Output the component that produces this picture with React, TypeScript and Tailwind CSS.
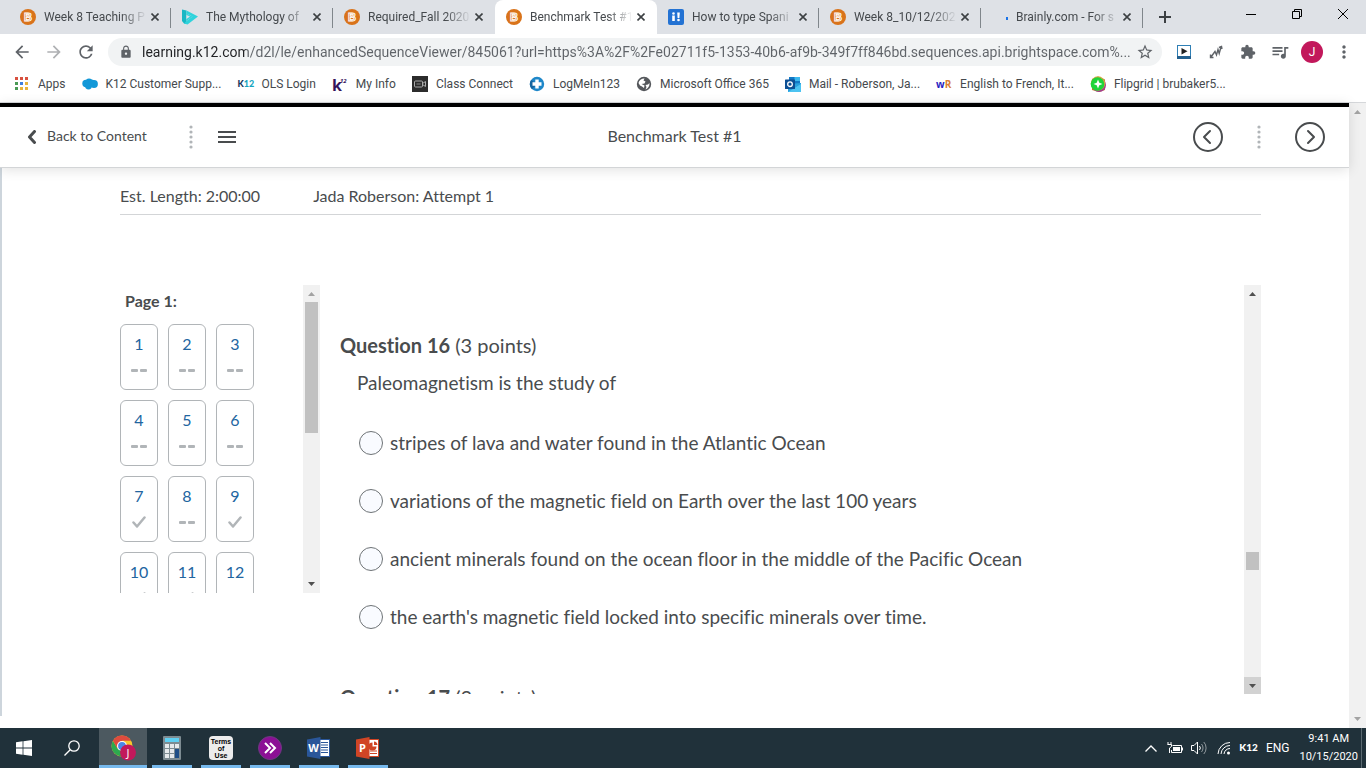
import { useState } from "react";
import type { ReactNode } from "react";
import {
  MdArrowBack,
  MdArrowForward,
  MdExtension,
  MdLock,
  MdMoreVert,
  MdQueueMusic,
  MdRefresh,
  MdStarBorder,
} from "react-icons/md";

/* ---------- Browser icons ---------- */

function BrightspaceIcon() {
  return (
    <svg viewBox="0 0 16 16" className="w-4 h-4 shrink-0" aria-hidden="true">
      <circle cx="8" cy="8" r="8" fill="#d9731a" />
      <text
        x="8"
        y="12"
        fontSize="11"
        fontWeight="700"
        fontFamily="Liberation Sans, sans-serif"
        textAnchor="middle"
        fill="#d9731a"
        stroke="#fff"
        strokeWidth="0.9"
      >
        B
      </text>
    </svg>
  );
}

function StudyIcon() {
  return (
    <svg viewBox="0 0 16 16" className="w-4 h-4 shrink-0" aria-hidden="true">
      <path d="M0 .5l4.500 1V15L2 14.500 0 12z" fill="#19b7c4" />
      <path d="M4.500 1.500L16 7.500 5.500 15.500 2 14.500l2.500-2.500 6-4.500-6-3z" fill="#2fd3dc" />
      <path d="M4.500 6l3.500 1.500-3.500 2.500z" fill="#dee1e6" />
      <path d="M4.500 4.500l6 3-6 4.500V10L8 7.500 4.500 6z" fill="#2fd3dc" />
    </svg>
  );
}

function HowToIcon() {
  return (
    <svg viewBox="0 0 16 16" className="w-4 h-4 shrink-0" aria-hidden="true">
      <rect width="16" height="16" rx="2" fill="#2372d3" />
      <path d="M4.200 6.500h2.600V12H4.200zM9.200 3.500h2.600l-.4 5.500H9.600z" fill="#fff" />
      <circle cx="5.500" cy="4.500" r="1.300" fill="#fff" />
      <circle cx="10.500" cy="11" r="1.300" fill="#fff" />
    </svg>
  );
}

function LoadingIcon() {
  return (
    <svg viewBox="0 0 16 16" className="w-4 h-4 shrink-0" aria-hidden="true">
      <path d="M15 8v3" stroke="#1a73e8" strokeWidth="2" />
    </svg>
  );
}

function AppsIcon() {
  const colors = ["#d85140", "#d85140", "#d85140", "#4a9a55", "#3f7fe0", "#e8b33c", "#4a9a55", "#e8b33c", "#e8b33c"];
  return (
    <svg viewBox="0 0 16 16" className="w-4 h-4 shrink-0" aria-hidden="true">
      {colors.map((c, i) => (
        <rect key={i} x={(i % 3) * 5 + 1} y={Math.floor(i / 3) * 5 + 1} width="3" height="3" fill={c} />
      ))}
    </svg>
  );
}

function CloudIcon() {
  return (
    <svg viewBox="0 0 16 16" className="w-4 h-4 shrink-0" aria-hidden="true">
      <g fill="#1298d8">
        <circle cx="4" cy="7.500" r="3.700" />
        <circle cx="7" cy="6" r="3.500" />
        <circle cx="12" cy="8" r="3.900" />
        <circle cx="6.500" cy="10" r="3.400" />
        <circle cx="9.500" cy="6.500" r="3" />
      </g>
    </svg>
  );
}

function K12Icon() {
  return (
    <span className="w-4 shrink-0 text-[9px] leading-4 font-black text-[#12355b] font-[Lato,sans-serif]" aria-hidden="true">
      K<span className="text-[#16a5c0]">12</span>
    </span>
  );
}

function MyInfoIcon() {
  return (
    <svg viewBox="0 0 16 16" className="w-4 h-4 shrink-0" aria-hidden="true">
      <text x="0" y="15" fontSize="16" fontWeight="700" fontFamily="Noto Sans, sans-serif" fill="#33135c">
        k
      </text>
      <text x="8" y="7" fontSize="6" fontWeight="700" fontStyle="italic" fontFamily="Noto Sans, sans-serif" fill="#33135c">
        12
      </text>
    </svg>
  );
}

function VideoIcon() {
  return (
    <svg viewBox="0 0 16 16" className="w-4 h-4 shrink-0" aria-hidden="true">
      <rect width="16" height="16" fill="#2b2b2b" />
      <rect x="2.500" y="5" width="8" height="6" rx="1" fill="none" stroke="#aaa" />
      <path d="M10.500 7.500l3-2v5l-3-2" fill="none" stroke="#aaa" />
      <path d="M4.500 8h4" stroke="#888" />
    </svg>
  );
}

function LogMeInIcon() {
  return (
    <svg viewBox="0 0 16 16" className="w-4 h-4 shrink-0" aria-hidden="true">
      <circle cx="8" cy="8" r="7.200" fill="#1e87c9" />
      <path d="M2 4a7.200 7.200 0 0 0 1 9.200L8 8z" fill="#16659f" />
      <path d="M6.300 3.500h3.400v2.800h2.800v3.400H9.700v2.800H6.300V9.700H3.500V6.300h2.800z" fill="#fff" />
    </svg>
  );
}

function GlobeIcon() {
  return (
    <svg viewBox="0 0 16 16" className="w-4 h-4 shrink-0" aria-hidden="true">
      <circle cx="8" cy="8" r="7.200" fill="#55585c" />
      <path
        d="M2.500 7C3 4 5.500 2.300 8.500 2.400L7.500 4.500l2 1-1 2-3 .5 3 1.500L8 12l-2-1.500-2-1zM9.500 13.500l1-2.500-1-2 2.500-.5L13.500 7c.3 3-1.500 5.600-4 6.500z"
        fill="#fff"
      />
    </svg>
  );
}

function OutlookIcon() {
  return (
    <svg viewBox="0 0 16 16" className="w-4 h-4 shrink-0" aria-hidden="true">
      <path d="M4 1h11v7H4z" fill="#1279c6" />
      <path d="M9.500 1H15v4H9.500z" fill="#3bb8ee" />
      <path d="M3 8l13-1v9H3z" fill="#28a0de" />
      <path d="M3 16l13-8v8z" fill="#4cc3f1" />
      <rect y="3.500" width="10" height="9.500" rx="0.500" fill="#0c4f94" />
      <circle cx="5" cy="8.200" r="2.300" fill="none" stroke="#fff" strokeWidth="1.300" />
    </svg>
  );
}

function WordReferenceIcon() {
  return (
    <span className="w-4 shrink-0 text-[10px] leading-4 font-bold text-[#2a1fc0] font-['Open_Sans',sans-serif]" aria-hidden="true">
      w<span className="text-[#d98032]">R</span>
    </span>
  );
}

function FlipgridIcon() {
  return (
    <svg viewBox="0 0 16 16" className="w-4 h-4 shrink-0" aria-hidden="true">
      <path d="M2 3l6-2.500 7 3V14l-6 2-7-2z" fill="#c5792a" />
      <circle cx="9" cy="9" r="7" fill="#a33b8f" />
      <circle cx="8" cy="7.500" r="7.200" fill="#d9a441" />
      <circle cx="7.500" cy="8" r="6.800" fill="#1fd43a" />
      <path d="M8 3.500L9.300 6.700 12.500 8 9.300 9.300 8 12.500 6.700 9.300 3.500 8l3.200-1.300z" fill="#fff" />
    </svg>
  );
}

/* ---------- Browser chrome ---------- */

const tabs: { title: string; icon: ReactNode; active?: boolean; divider?: boolean }[] = [
  { title: "Week 8 Teaching P", icon: <BrightspaceIcon />, divider: true },
  { title: "The Mythology of", icon: <StudyIcon />, divider: true },
  { title: "Required_Fall 2020", icon: <BrightspaceIcon /> },
  { title: "Benchmark Test #1", icon: <BrightspaceIcon />, active: true },
  { title: "How to type Spani", icon: <HowToIcon />, divider: true },
  { title: "Week 8_10/12/202", icon: <BrightspaceIcon />, divider: true },
  { title: "Brainly.com - For s", icon: <LoadingIcon />, divider: true },
];

const bookmarks: { label: string; icon: ReactNode }[] = [
  { label: "Apps", icon: <AppsIcon /> },
  { label: "K12 Customer Supp...", icon: <CloudIcon /> },
  { label: "OLS Login", icon: <K12Icon /> },
  { label: "My Info", icon: <MyInfoIcon /> },
  { label: "Class Connect", icon: <VideoIcon /> },
  { label: "LogMeIn123", icon: <LogMeInIcon /> },
  { label: "Microsoft Office 365", icon: <GlobeIcon /> },
  { label: "Mail - Roberson, Ja...", icon: <OutlookIcon /> },
  { label: "English to French, It...", icon: <WordReferenceIcon /> },
  { label: "Flipgrid | brubaker5...", icon: <FlipgridIcon /> },
];

function TabStrip() {
  return (
    <div className="flex h-[34px] bg-[#dee1e6] pl-[9px] text-[#45494d]">
      {tabs.map((tab) => (
        <div
          key={tab.title}
          className={
            tab.active
              ? "flex items-center w-[162px] pl-[11px] pr-2 bg-white rounded-t-lg"
              : "relative flex items-center w-[162px] pl-[11px] pr-2"
          }
        >
          {tab.icon}
          <span className="flex-1 min-w-0 ml-2 overflow-hidden whitespace-nowrap text-xs mask-r-from-75%">{tab.title}</span>
          <button aria-label={"Close " + tab.title} className="w-4 h-4 flex items-center justify-center">
            <svg viewBox="0 0 8 8" className="w-2 h-2" stroke="#3c4043" strokeWidth="1.600">
              <path d="M.5.5l7 7M7.500.5l-7 7" />
            </svg>
          </button>
          {tab.divider && <span className="absolute right-0 top-2 h-5 w-px bg-[#80868b]" />}
        </div>
      ))}
      <button aria-label="New tab" className="w-11 flex items-center justify-center">
        <svg viewBox="0 0 12 12" className="w-3 h-3">
          <path d="M6 0v12M0 6h12" stroke="#3c4043" strokeWidth="2" />
        </svg>
      </button>
      <div className="ml-auto flex pb-1.5">
        <button aria-label="Minimize" className="w-[46px] flex items-center justify-center">
          <svg viewBox="0 0 10 10" className="w-2.5 h-2.5">
            <path d="M0 5.500h10" stroke="#000" />
          </svg>
        </button>
        <button aria-label="Restore" className="w-[46px] flex items-center justify-center">
          <svg viewBox="0 0 10 10" className="w-2.5 h-2.5" fill="none" stroke="#000">
            <path d="M.5 2.500h7v7h-7zM2.500 2.500v-2h7v7h-2" />
          </svg>
        </button>
        <button aria-label="Close" className="w-[46px] flex items-center justify-center">
          <svg viewBox="0 0 10 10" className="w-2.5 h-2.5" stroke="#000">
            <path d="M0 0l10 10M10 0L0 10" />
          </svg>
        </button>
      </div>
    </div>
  );
}

function ToolButton({ label, children }: { label: string; children: ReactNode }) {
  return (
    <button aria-label={label} className="w-8 h-8 shrink-0 flex items-center justify-center text-[#5f6368]">
      {children}
    </button>
  );
}

function Toolbar() {
  return (
    <div className="flex items-center h-9 px-1.5">
      <ToolButton label="Back">
        <MdArrowBack className="w-5 h-5" />
      </ToolButton>
      <ToolButton label="Forward">
        <MdArrowForward className="w-5 h-5 opacity-50" />
      </ToolButton>
      <ToolButton label="Reload">
        <MdRefresh className="w-5 h-5" />
      </ToolButton>
      <div className="flex flex-1 min-w-0 items-center h-7 mx-1.5 pl-[11px] pr-2 rounded-full bg-[#f1f3f4] text-[#5f6368]">
        <MdLock className="w-3.5 h-3.5 shrink-0" />
        <input
          aria-label="Address and search bar"
          className="flex-1 min-w-0 ml-[9px] outline-none text-sm text-transparent bg-clip-text bg-[linear-gradient(90deg,#202124_104px,#5f6368_104px)]"
          defaultValue="learning.k12.com/d2l/le/enhancedSequenceViewer/845061?url=https%3A%2F%2Fe02711f5-1353-40b6-af9b-349f7ff846bd.sequences.api.brightspace.com%..."
        />
        <button aria-label="Bookmark this tab">
          <MdStarBorder className="w-[18px] h-[18px]" />
        </button>
      </div>
      <ToolButton label="Video player">
        <svg viewBox="0 0 14 14" className="w-3.5 h-3.5">
          <rect x="0.500" y="0.500" width="13" height="12" fill="#fff" stroke="#2f7fb5" />
          <rect y="11" width="14" height="3" fill="#23608f" />
          <path d="M4.500 3l6 3.200-6 3.200z" fill="#222" />
        </svg>
      </ToolButton>
      <ToolButton label="Annotate">
        <svg viewBox="0 0 14 14" className="w-3.5 h-3.5" fill="none" stroke="#5f6368" strokeWidth="1.400">
          <path d="M2 12L6 6.500 7.500 10 9 4.500l1.200 4L12 2M1.500 9.500v3h3M10 2.500l2.500-1 .5 2.500" />
        </svg>
      </ToolButton>
      <ToolButton label="Extensions">
        <MdExtension className="w-4 h-4" />
      </ToolButton>
      <ToolButton label="Media">
        <MdQueueMusic className="w-5 h-5" />
      </ToolButton>
      <ToolButton label="Profile">
        <span className="w-[22px] h-[22px] rounded-full bg-[#c2185b] text-white text-xs leading-[22px]">J</span>
      </ToolButton>
      <ToolButton label="Menu">
        <MdMoreVert className="w-5 h-5" />
      </ToolButton>
    </div>
  );
}

function BookmarksBar() {
  return (
    <nav aria-label="Bookmarks" className="flex items-center gap-4 h-8 pl-3.5 pb-1 text-xs text-[#45494d]">
      {bookmarks.map((b) => (
        <a key={b.label} href="#" className="flex items-center gap-2 whitespace-nowrap">
          {b.icon}
          {b.label}
        </a>
      ))}
    </nav>
  );
}

/* ---------- Page ---------- */

function Arrow({ up, className }: { up?: boolean; className: string }) {
  return (
    <svg viewBox="0 0 7 4" className={className} fill="currentColor" aria-hidden="true">
      <path d={up ? "M0 4L3.500 0 7 4z" : "M0 0l3.500 4L7 0z"} />
    </svg>
  );
}

function Dots() {
  return (
    <svg viewBox="0 0 4 24" className="w-1 h-6" fill="#b1b5b8" aria-hidden="true">
      {[2, 7, 12, 17, 22].map((y) => (
        <circle key={y} cx="2" cy={y} r="1.600" />
      ))}
    </svg>
  );
}

function CircleButton({ label, d }: { label: string; d: string }) {
  return (
    <button aria-label={label}>
      <svg viewBox="0 0 30 30" className="w-[30px] h-[30px]" fill="none" stroke="#494c4e" strokeWidth="2">
        <circle cx="15" cy="15" r="14" />
        <path d={d} strokeLinecap="round" strokeLinejoin="round" />
      </svg>
    </button>
  );
}

function ViewerHeader() {
  return (
    <header className="relative grid grid-cols-[1fr_auto_1fr] items-center h-[65px] shrink-0 border-t-4 border-t-black border-b border-b-[#d3d5d7] bg-white shadow-[0_2px_12px_rgba(0,0,0,0.12)]">
      <div className="flex items-center pl-[27px]">
        <a href="#" className="flex items-center gap-2.5 text-sm">
          <svg viewBox="0 0 10 14" className="w-2.5 h-3.5" fill="none" stroke="#494c4e" strokeWidth="3" aria-hidden="true">
            <path d="M7.500 1.500L2.500 7l5 5.500" strokeLinecap="round" strokeLinejoin="round" />
          </svg>
          <span className="pb-0.5">Back to Content</span>
        </a>
        <div className="flex items-center gap-[25px] ml-[42px]">
          <Dots />
          <button aria-label="Table of contents">
            <svg viewBox="0 0 18 12" className="w-[18px] h-3" stroke="#494c4e" strokeWidth="2">
              <path d="M0 1h18M0 6h18M0 11h18" />
            </svg>
          </button>
        </div>
      </div>
      <h1 className="pb-0.5 text-base">Benchmark Test #1</h1>
      <div className="flex items-center justify-end gap-[34px] pr-6">
        <CircleButton label="Previous" d="M17 9l-6 6 6 6" />
        <Dots />
        <CircleButton label="Next" d="M13 9l6 6-6 6" />
      </div>
    </header>
  );
}

const answered = [7, 9, 10, 11];

function QuestionNav() {
  return (
    <div className="flex w-[200px] h-[308px] shrink-0">
      <div className="flex-1 overflow-hidden">
        <h2 className="mt-1 ml-[5px] text-base leading-6 font-bold">Page 1:</h2>
        <div className="grid grid-cols-[38px_38px_38px] gap-2.5 mt-[11px]">
          {Array.from({ length: 12 }, (_, i) => i + 1).map((n) => (
            <a
              key={n}
              href="#"
              className="flex flex-col items-center h-[66px] pt-[7px] border border-[#b1b5b8] rounded-md text-base text-[#22659f]"
            >
              {n}
              {answered.includes(n) ? (
                <svg viewBox="0 0 14 12" className="w-3.5 h-3 mt-2" fill="none" stroke="#b1b5b8" strokeWidth="2.500" aria-hidden="true">
                  <path d="M1.500 6.500l3.500 4 7.500-9" strokeLinecap="round" strokeLinejoin="round" />
                </svg>
              ) : (
                <svg viewBox="0 0 16 3" className="w-4 h-[3px] mt-[13px]" fill="#b1b5b8" aria-hidden="true">
                  <rect width="7" height="3" rx="1" />
                  <rect x="9" width="7" height="3" rx="1" />
                </svg>
              )}
            </a>
          ))}
        </div>
      </div>
      <div className="flex flex-col items-center w-[17px] py-[7px] bg-[#f1f1f1]">
        <Arrow up className="w-[7px] h-1 text-[#a3a3a3]" />
        <div className="w-[13px] h-[131px] mt-1.5 bg-[#c1c1c1]" />
        <Arrow className="w-[7px] h-1 mt-auto text-[#505050]" />
      </div>
    </div>
  );
}

const options = [
  "stripes of lava and water found in the Atlantic Ocean",
  "variations of the magnetic field on Earth over the last 100 years",
  "ancient minerals found on the ocean floor in the middle of the Pacific Ocean",
  "the earth's magnetic field locked into specific minerals over time.",
];

function QuestionPanel() {
  const [choice, setChoice] = useState<number | null>(null);

  return (
    <div className="flex flex-1 min-w-0">
      <div className="flex-1 min-w-0 h-[409px] overflow-hidden pl-5 pt-[45px] text-[19px] leading-[30px]">
        <h2 className="text-xl leading-[30px]">
          <b>Question 16</b> (3 points)
        </h2>
        <fieldset className="mt-2 pl-[17px]">
          <legend>Paleomagnetism is the study of</legend>
          <div className="flex flex-col gap-7 mt-[30px] pl-0.5">
            {options.map((text, i) => (
              <label key={text} className="flex items-center gap-[7px]">
                <input
                  type="radio"
                  name="q16"
                  checked={choice === i}
                  onChange={() => setChoice(i)}
                  className="appearance-none w-6 h-6 shrink-0 rounded-full border border-[#6e7376] bg-[#f9fbff] checked:border-8"
                />
                {text}
              </label>
            ))}
          </div>
        </fieldset>
        <h2 className="mt-[50px] text-xl leading-[30px]">
          <b>Question 17</b> (3 points)
        </h2>
      </div>
      <div className="flex flex-col items-center w-[17px] h-[409px] pt-[7px] bg-[#f1f1f1]">
        <Arrow up className="w-[7px] h-1 text-[#505050]" />
        <div className="w-[13px] h-[18px] mt-64 bg-[#c1c1c1]" />
        <div className="flex items-center justify-center w-[17px] h-[17px] mt-auto bg-[#d2d2d2]">
          <Arrow className="w-[7px] h-1 text-[#505050]" />
        </div>
      </div>
    </div>
  );
}

function Viewer() {
  return (
    <div className="flex flex-1 min-h-0">
      <div className="flex flex-col flex-1 min-w-0 font-[Lato,sans-serif] [font-variant-ligatures:none] text-[#494c4e]">
        <ViewerHeader />
        <main className="flex-1 mb-3 border-l-2 border-[#cdd5dc] pl-[118px] pr-[88px]">
          <div className="flex gap-[53px] pt-4 pb-1.5 border-b border-[#d3d5d7] text-base">
            <span>Est. Length: 2:00:00</span>
            <span>Jada Roberson: Attempt 1</span>
          </div>
          <div className="flex items-start mt-[70px]">
            <QuestionNav />
            <QuestionPanel />
          </div>
        </main>
      </div>
      <div className="flex flex-col items-center justify-between w-[17px] py-[7px] bg-[#f1f1f1]">
        <Arrow up className="w-[7px] h-1 text-[#a3a3a3]" />
        <Arrow className="w-[7px] h-1 text-[#a3a3a3]" />
      </div>
    </div>
  );
}

/* ---------- Taskbar ---------- */

function ChromeIcon() {
  return (
    <svg viewBox="0 0 26 26" className="w-[26px] h-[26px]" aria-hidden="true">
      <circle cx="12" cy="11" r="10.500" fill="#f7c52d" />
      <path d="M2.900 5.800A10.500 10.500 0 0 0 12 21.500l4.500-8L7.500 13.500z" fill="#2da94f" />
      <path d="M2.900 5.800A10.500 10.500 0 0 1 21.100 5.800H12L7.500 13.500z" fill="#dd4b3e" />
      <circle cx="12" cy="11" r="5" fill="#fff" />
      <circle cx="12" cy="11" r="3.900" fill="#4a86e8" />
      <circle cx="18" cy="17.500" r="8" fill="#c2185b" />
      <text x="18" y="21.500" fontSize="11" fontFamily="Open Sans, sans-serif" textAnchor="middle" fill="#fff">
        J
      </text>
    </svg>
  );
}

function CalculatorIcon() {
  return (
    <svg viewBox="0 0 18 24" className="w-[18px] h-6" aria-hidden="true">
      <rect width="18" height="24" rx="1" fill="#7d8c92" />
      <rect x="2" y="2" width="14" height="4" fill="#5fd0f2" />
      {[8, 13, 18].map((y) => (
        <g key={y}>
          <rect x="2" y={y} width="4" height="4" fill="#e6eaec" />
          <rect x="7" y={y} width="4" height="4" fill="#e6eaec" />
          <rect x="12" y={y} width="4" height={y === 13 ? 6 : 4} fill={y === 8 ? "#e6eaec" : "#1f4e86"} />
        </g>
      ))}
    </svg>
  );
}

function ConnectIcon() {
  return (
    <svg viewBox="0 0 24 24" className="w-6 h-6" aria-hidden="true">
      <circle cx="12" cy="12" r="11.500" fill="#8c0f95" stroke="#6d3a80" />
      <path d="M7 7l5 5-5 5M12 7l5 5-5 5" fill="none" stroke="#fff" strokeWidth="2" />
    </svg>
  );
}

function OfficeIcon({ letter, color }: { letter: string; color: string }) {
  return (
    <svg viewBox="0 0 24 22" className="w-6 h-[22px]" aria-hidden="true">
      <rect x="12" y="2.500" width="10.500" height="17" fill="#fff" stroke={color} />
      {letter === "W" ? (
        <path d="M14 5.500h7M14 8h7M14 10.500h7M14 13h7M14 15.500h7" stroke={color} strokeWidth="1.200" />
      ) : (
        <g stroke={color} fill={color}>
          <path d="M14 14h7M14 16.500h7" />
          <path d="M16.500 5.500v4h4a4 4 0 1 1-4-4z" stroke="none" />
          <path d="M18 4.500a4 4 0 0 1 3.500 3.500H18z" stroke="none" />
        </g>
      )}
      <path d="M0 2.500L13.500 0v22L0 19.500z" fill={color} />
      <text x="6.500" y="15" fontSize="11" fontWeight="700" fontFamily="Open Sans, sans-serif" textAnchor="middle" fill="#fff">
        {letter}
      </text>
    </svg>
  );
}

const apps: { name: string; icon: ReactNode }[] = [
  { name: "Calculator", icon: <CalculatorIcon /> },
  {
    name: "Terms of Use",
    icon: (
      <span className="w-6 h-6 rounded-sm bg-[#ececec] text-black text-[7px] leading-[7px] pt-0.5 font-bold font-['Liberation_Sans',sans-serif]">
        Terms
        <br />
        of
        <br />
        Use
      </span>
    ),
  },
  { name: "Connect", icon: <ConnectIcon /> },
  { name: "Word", icon: <OfficeIcon letter="W" color="#2a5699" /> },
  { name: "PowerPoint", icon: <OfficeIcon letter="P" color="#d04525" /> },
];

function Taskbar() {
  return (
    <footer className="flex h-10 shrink-0 bg-[#20313a] text-xs text-white">
      <button aria-label="Start" className="w-12 flex items-center justify-center">
        <svg viewBox="0 0 16 16" className="w-4 h-4" fill="#fff">
          <path d="M0 2.200L6.600 1.300v6.300H0zM7.400 1.200L16 0v7.600H7.400zM0 8.400h6.600v6.300L0 13.800zM7.400 8.400H16V16l-8.600-1.200z" />
        </svg>
      </button>
      <button aria-label="Search" className="w-12 flex items-center justify-center">
        <svg viewBox="0 0 16 16" className="w-4 h-4" fill="none" stroke="#fff" strokeWidth="1.300">
          <circle cx="10" cy="6" r="5.200" />
          <path d="M6.200 9.800L.5 15.500" />
        </svg>
      </button>
      <button
        aria-label="Chrome"
        className="w-12 ml-[3px] pt-[3px] flex items-center justify-center bg-[#4c5960] border-b-3 border-[#76b9ed]"
      >
        <ChromeIcon />
      </button>
      <div className="flex gap-[9px] ml-[5px]">
        {apps.map((app) => (
          <button
            key={app.name}
            aria-label={app.name}
            className="w-10 pt-[3px] flex items-center justify-center border-b-3 border-[#76b9ed]"
          >
            {app.icon}
          </button>
        ))}
      </div>
      <div className="flex items-center ml-auto pr-1">
        <svg viewBox="0 0 12 7" className="w-3 h-[7px]" fill="none" stroke="#fff" strokeWidth="1.300" aria-hidden="true">
          <path d="M.5 6.500L6 1l5.500 5.500" />
        </svg>
        <svg viewBox="0 0 16 12" className="w-4 h-3 ml-2.5" fill="none" stroke="#fff" aria-hidden="true">
          <path d="M5.500 3.500h9v7h-10V8M1 0v2.500M4 0v2.500M.5 2.500h4v2l-2 1.500v5" />
          <path d="M6 5h7v4H6z" fill="#fff" stroke="none" />
          <path d="M15.500 5.500v3" />
        </svg>
        <svg viewBox="0 0 16 14" className="w-4 h-3.5 ml-2" fill="none" stroke="#fff" aria-hidden="true">
          <path d="M.5 4.500h2.500L6.500 1v12L3 9.500H.5z" />
          <path d="M8.500 5a3 3 0 0 1 0 4" />
          <path d="M10.500 3a6 6 0 0 1 0 8M12.800 1a9 9 0 0 1 0 12" opacity="0.500" />
        </svg>
        <svg viewBox="0 0 14 14" className="w-3.5 h-3.5 ml-2.5" fill="none" stroke="#fff" aria-hidden="true">
          <path d="M1 13A12 12 0 0 1 13 1.500M4 13A9 9 0 0 1 13 4.500M7 13a6 6 0 0 1 6-5.500" />
          <circle cx="11.500" cy="12" r="1.500" fill="#fff" stroke="none" />
        </svg>
        <span className="ml-2 text-[10px] font-black font-[Lato,sans-serif]">K12</span>
        <span className="ml-2">ENG</span>
        <div className="flex items-center ml-2.5">
          <div className="text-[11px] leading-[18px] text-center">
            9:41 AM
            <br />
            10/15/2020
          </div>
          <span className="w-px h-10 ml-[3px] bg-[#5b6a71]" />
        </div>
      </div>
    </footer>
  );
}

export default function App() {
  return (
    <div className="flex flex-col h-screen overflow-hidden bg-white font-[Roboto,'Open_Sans',sans-serif]">
      <div className="shrink-0 border-b border-[#d5d7da]">
        <TabStrip />
        <Toolbar />
        <BookmarksBar />
      </div>
      <Viewer />
      <Taskbar />
    </div>
  );
}
